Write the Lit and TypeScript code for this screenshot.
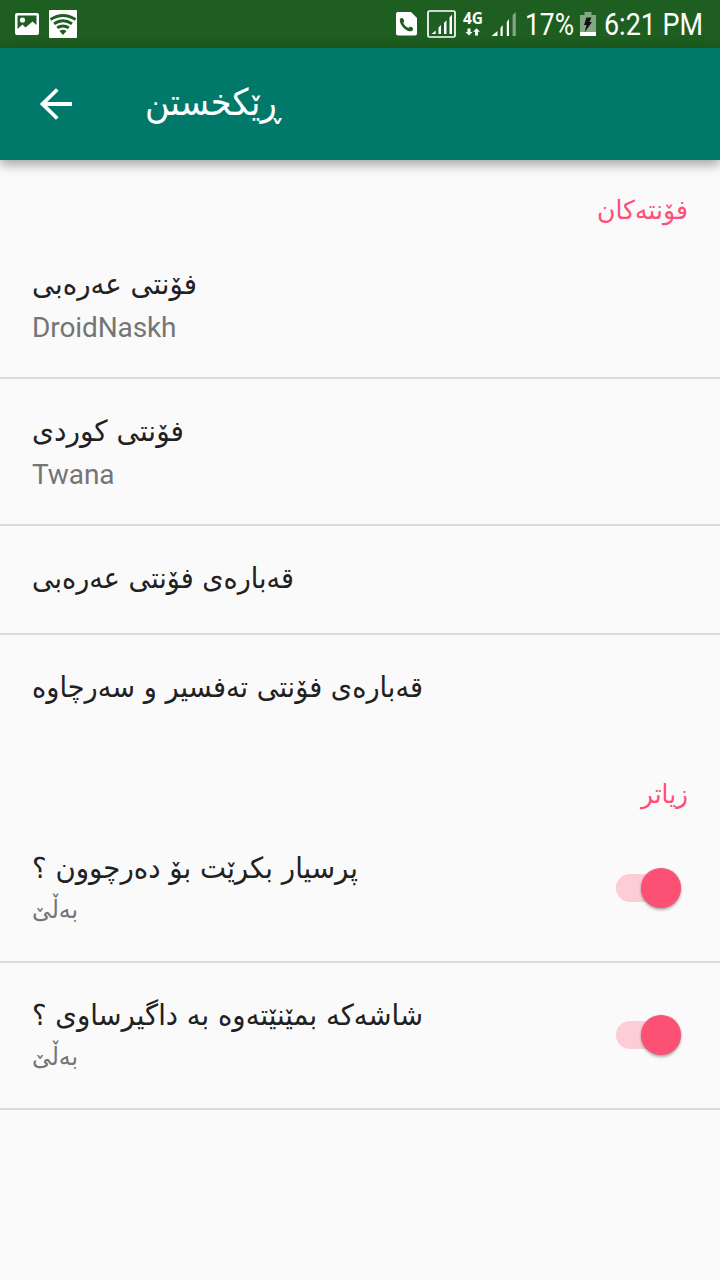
import { LitElement, html, css, svg } from "lit";
import { customElement, property } from "lit/decorators.js";

@customElement("fit-text")
class FitText extends LitElement {
  @property() text = "";
  @property({ type: Number }) width = 100;
  @property({ type: Number }) height = 40;
  @property({ type: Number }) baseline = 30;
  static styles = css`
    :host { display: block; flex: none; }
    svg { display: block; overflow: visible; }
    text { fill: currentColor; }
  `;
  render() {
    return html`<svg width=${this.width} height=${this.height}>
      ${svg`<text x="0" y=${this.baseline} textLength=${this.width} lengthAdjust="spacingAndGlyphs">${this.text}</text>`}
    </svg>`;
  }
}

@customElement("settings-switch")
class SettingsSwitch extends LitElement {
  static styles = css`
    :host { display: block; flex: none; margin-bottom: 2px; }
    .track { display: flex; align-items: center; justify-content: flex-end; width: 65px; height: 28px; border-radius: 14px; background: linear-gradient(90deg, #fccdd7 45px, transparent 45px); }
    .thumb { width: 40px; height: 40px; flex: none; border-radius: 50%; background: #fc5074; box-shadow: 0 2px 3px rgba(0,0,0,.3), 0 0 2px rgba(0,0,0,.14); }
  `;
  render() {
    return html`<div class="track"><div class="thumb"></div></div>`;
  }
}

@customElement("status-bar")
class StatusBar extends LitElement {
  static styles = css`
    :host { display: flex; height: 48px; background: #1e5e20; color: #fff; font-family: Roboto, sans-serif; }
    svg { display: block; flex: none; }
    .left { flex: 1; }
    .pct, .time { font-size: 31px; }
    .pct { margin-left: 7px; }
    .time { margin: 0 17px 0 7px; }
    .net { font: 700 16px "Open Sans", sans-serif; fill: #fff; }
  `;
  render() {
    return html`
      <svg class="left" height="48" fill="#fff">
        <path fill-rule="evenodd" d="M17 13H37a2 2 0 0 1 2 2V33a2 2 0 0 1-2 2H17a2 2 0 0 1-2-2V15a2 2 0 0 1 2-2ZM18 15.500a.5.5 0 0 0-.5.5V29L22.500 24.500 25.500 27.500 32.500 21.500 36.500 25V16a.5.5 0 0 0-.5-.5Z"/>
        <circle cx="22.500" cy="20" r="2.600"/>
        <rect x="49" y="10" width="28" height="28" rx="1"/>
        <g fill="none" stroke="#1e5e20" stroke-width="3">
          <path d="M50.500 19.500Q63 11.500 75.500 19.500M54 23.700Q63 18 72 23.700M57.200 27.800Q63 24 68.800 27.800"/>
        </g>
        <path fill="#1e5e20" d="M59.500 31Q63 28.500 66.500 31L63 35Z"/>
      </svg>
      <svg width="122" height="48" viewBox="396 0 122 48" fill="#fff">
        <path d="M398 12H411L417 18V33.500a2 2 0 0 1-2 2H398a2 2 0 0 1-2-2V14a2 2 0 0 1 2-2Z"/>
        <path fill="#1e5e20" d="M400.300 18.500C401.500 17.500 403 17.500 404 20Q404.700 21.500 403.200 22.800C404.300 25.500 406 27 408.600 28Q409.800 26.300 411.300 27.100C413.700 28 413.500 29.500 412.300 30.800C410.500 32 407 30.900 404.500 28.700C401 25.500 398.800 21 400.300 18.500Z"/>
        <rect x="428" y="11" width="27" height="26" rx="1.500" fill="none" stroke="#fff" stroke-width="1.700"/>
        <path d="M431.500 34L435.700 30.500V34ZM438.500 34V27.500L441 25V34ZM444 34V23L446.500 20.200V34ZM449.500 34V17.500L452 14.500V34Z"/>
        <text class="net" x="463" y="24" textLength="20" lengthAdjust="spacingAndGlyphs">4G</text>
        <path d="M467.500 28.500H470.500V32H472.500L469 35.500 465.500 32H467.500ZM475 35.500V31.800H473L476.500 28.300 480 31.800H478V35.500Z"/>
        <path d="M491.500 36L497.500 31V36ZM500.500 36V28L502.700 25V36ZM506.800 36V22L509 19V36Z"/>
        <path opacity=".45" d="M512.600 36V15L515.800 12V36Z"/>
      </svg>
      <fit-text class="pct" text="17%" width="49" height="48" baseline="35"></fit-text>
      <svg width="23" height="48" viewBox="574 0 23 48">
        <path fill="#83a984" d="M584.500 12H591.500V15H596V36H580V15H584.500Z"/>
        <path fill="#fff" d="M580 32H596V36H580Z"/>
        <path fill="#111" d="M586.500 17.500H591.500L589.500 22H592L584.500 32.500 586.500 25H584Z"/>
      </svg>
      <fit-text class="time" text="6:21 PM" width="99" height="48" baseline="35"></fit-text>`;
  }
}

@customElement("app-root")
class AppRoot extends LitElement {
  static styles = css`
    :host { display: flex; flex-direction: column; min-height: 1280px; background: #fafafa; color: #212121; font-family: "DejaVu Sans", sans-serif; font-size: 29px; }
    .bar { display: flex; height: 112px; background: #00796b; color: #fff; box-shadow: 0 5px 10px rgba(0,0,0,.24), 0 2px 14px rgba(0,0,0,.16); }
    .back { display: block; width: 112px; height: 112px; }
    .title { margin-left: 33px; font-size: 37px; }
    .cat { display: flex; justify-content: flex-end; height: 72px; padding-right: 32px; color: #ff4f79; font-size: 26px; }
    .cat.more { padding-top: 2px; }
    .row { display: flex; align-items: center; justify-content: space-between; height: 145px; padding: 0 39px 0 32px; border-bottom: 2px solid #dadada; }
    .row.single { height: 107px; }
    .row.last { border-bottom: 0; }
    .texts { height: 100%; }
    .sub { color: #757575; font: 28px/32px Roboto, sans-serif; letter-spacing: -0.1px; margin-top: 10px; }
    .ksub { color: #757575; font-size: 25px; }
  `;
  render() {
    const t = (text: string, width: number, baseline = 62, height = 70) =>
      html`<fit-text .text=${text} .width=${width} .height=${height} .baseline=${baseline}></fit-text>`;
    const k = html`<fit-text class="ksub" .text=${"بەڵێ"} .width=${46} .height=${45} .baseline=${32}></fit-text>`;
    return html`
      <status-bar></status-bar>
      <div class="bar">
        <svg class="back" viewBox="0 0 112 112" fill="none" stroke="#fff" stroke-width="3.800"><path d="M72 56H43M57.300 41.500 42.500 56 57.300 70.500"/></svg>
        <fit-text class="title" text="ڕێکخستن" width="136" height="112" baseline="67"></fit-text>
      </div>
      <div class="cat">${t("فۆنتەکان", 91, 59)}</div>
      <div class="row"><div class="texts">${t("فۆنتی عەرەبی", 165)}<div class="sub">DroidNaskh</div></div></div>
      <div class="row"><div class="texts">${t("فۆنتی کوردی", 152)}<div class="sub">Twana</div></div></div>
      <div class="row single"><div class="texts">${t("قەبارەی فۆنتی عەرەبی", 262)}</div></div>
      <div class="row single last"><div class="texts">${t("قەبارەی فۆنتی تەفسیر و سەرچاوە", 391)}</div></div>
      <div class="cat more">${t("زیاتر", 47, 59)}</div>
      <div class="row"><div class="texts">${t("پرسیار بکرێت بۆ دەرچوون ؟", 326)}${k}</div><settings-switch></settings-switch></div>
      <div class="row"><div class="texts">${t("شاشەکە بمێنێتەوە بە داگیرساوی ؟", 391)}${k}</div><settings-switch></settings-switch></div>`;
  }
}
